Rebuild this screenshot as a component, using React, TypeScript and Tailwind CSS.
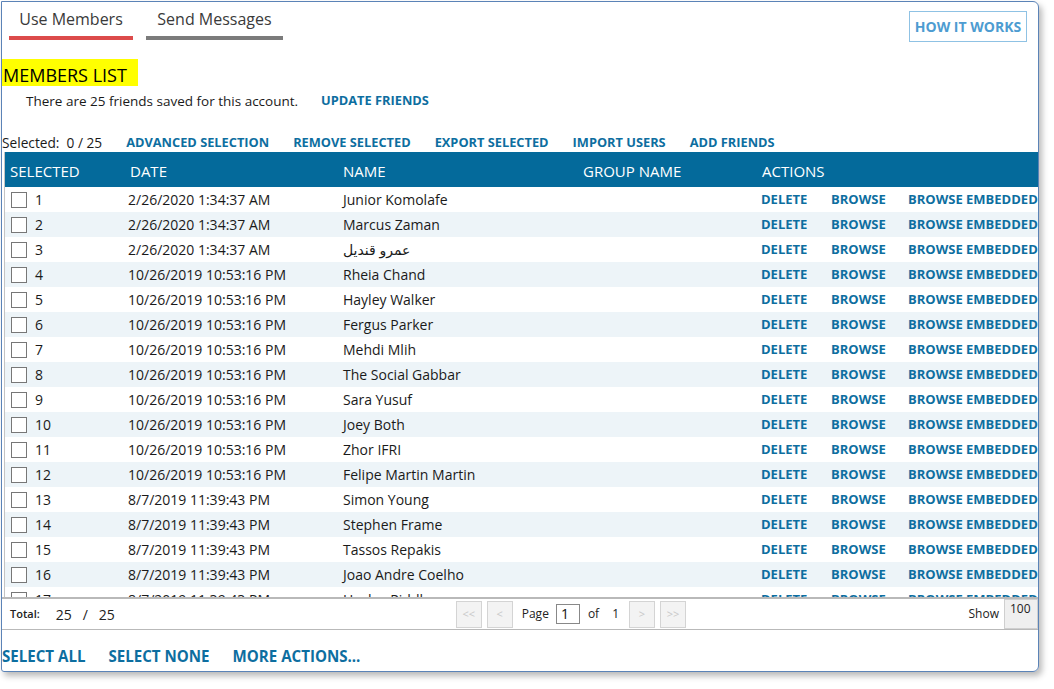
import React from "react";

const rows: [string, string, string][] = [
  ["1", "2/26/2020 1:34:37 AM", "Junior Komolafe"],
  ["2", "2/26/2020 1:34:37 AM", "Marcus Zaman"],
  ["3", "2/26/2020 1:34:37 AM", "عمرو قنديل"],
  ["4", "10/26/2019 10:53:16 PM", "Rheia Chand"],
  ["5", "10/26/2019 10:53:16 PM", "Hayley Walker"],
  ["6", "10/26/2019 10:53:16 PM", "Fergus Parker"],
  ["7", "10/26/2019 10:53:16 PM", "Mehdi Mlih"],
  ["8", "10/26/2019 10:53:16 PM", "The Social Gabbar"],
  ["9", "10/26/2019 10:53:16 PM", "Sara Yusuf"],
  ["10", "10/26/2019 10:53:16 PM", "Joey Both"],
  ["11", "10/26/2019 10:53:16 PM", "Zhor IFRI"],
  ["12", "10/26/2019 10:53:16 PM", "Felipe Martin Martin"],
  ["13", "8/7/2019 11:39:43 PM", "Simon Young"],
  ["14", "8/7/2019 11:39:43 PM", "Stephen Frame"],
  ["15", "8/7/2019 11:39:43 PM", "Tassos Repakis"],
  ["16", "8/7/2019 11:39:43 PM", "Joao Andre Coelho"],
  ["17", "8/7/2019 11:39:43 PM", "Hayley Riddle"],
];

const font = { fontFamily: '"Open Sans", "DejaVu Sans", sans-serif' };

function PagerBtn({ label }: { label: string }) {
  return (
    <div className="w-[26px] h-[27px] border border-[#d4d4d4] bg-[#f3f3f3] flex items-center justify-center text-[11px] text-[#c8c8c8]">
      {label}
    </div>
  );
}

export default function App() {
  return (
    <div className="w-[1054px] h-[689px] bg-white overflow-hidden" style={font}>
      <div className="ml-px mt-px w-[1038px] h-[671px] border border-[#5b83b7] rounded-r-[6px] rounded-bl-[3px] shadow-[3px_4px_6px_rgba(0,0,0,0.28)] overflow-hidden flex flex-col">
        {/* header row */}
        <div className="h-[40px] flex justify-between items-start shrink-0">
          <div className="flex gap-[13px] ml-[7px] pt-[7px]">
            <div className="flex flex-col items-center w-[124px]">
              <div className="h-[20px] leading-[20px] text-[16px] text-[#3a3a3a]">Use Members</div>
              <div className="mt-[7px] h-[4px] w-full bg-[#dc4b4b]" />
            </div>
            <div className="flex flex-col items-center w-[137px]">
              <div className="h-[20px] leading-[20px] text-[16px] text-[#3a3a3a]">Send Messages</div>
              <div className="mt-[7px] h-[4px] w-full bg-[#7b7b7b]" />
            </div>
          </div>
          <div className="mt-[9px] mr-[11px] w-[118px] h-[31px] border border-[#8fc2e4] flex items-center justify-center text-[14px] font-bold text-[#4d9cd1]">
            HOW IT WORKS
          </div>
        </div>

        {/* members list */}
        <div className="mt-[17px] flex shrink-0">
          <div className="flex h-[27px] w-[136px] bg-[#ffff00] items-end pl-[1px] text-[18px] leading-[22px] text-black">
            MEMBERS LIST
          </div>
        </div>
        <div className="mt-[5px] h-[20px] flex items-center pl-[24px] gap-[23px] shrink-0">
          <span className="text-[13.5px] text-[#1a1a1a]">There are 25 friends saved for this account.</span>
          <span className="text-[12.8px] font-bold text-[#0d6ea0]">UPDATE FRIENDS</span>
        </div>

        {/* selection row */}
        <div className="mt-[23px] h-[18px] flex items-center gap-[24px] shrink-0 text-[12.8px] font-bold text-[#0d6ea0]">
          <span className="text-[13.7px] font-normal text-[#1a1a1a]">Selected:&nbsp; 0 / 25</span>
          <span>ADVANCED SELECTION</span>
          <span>REMOVE SELECTED</span>
          <span>EXPORT SELECTED</span>
          <span>IMPORT USERS</span>
          <span>ADD FRIENDS</span>
        </div>

        {/* table */}
        <div className="ml-[2px] h-[445px] overflow-hidden border-l border-[#c4c4c4] shrink-0">
          <div className="h-[35px] pt-[3px] bg-[#046a9b] grid grid-cols-[120px_213px_240px_179px_1fr] items-center text-[15px] text-white">
            <div className="pl-[5px]">SELECTED</div>
            <div className="pl-[5px]">DATE</div>
            <div className="pl-[5px]">NAME</div>
            <div className="pl-[5px]">GROUP NAME</div>
            <div className="pl-[5px]">ACTIONS</div>
          </div>
          {rows.map(([n, d, name], i) => (
            <div
              key={n}
              className={`h-[25px] grid grid-cols-[120px_213px_240px_179px_1fr] items-center text-[14px] text-[#1a1a1a] ${
                i % 2 === 1 ? "bg-[#edf4f8]" : "bg-white"
              }`}
            >
              <div className="pl-[6px] flex items-center gap-[8px]">
                <div className="w-[16px] h-[16px] border border-[#777] bg-white" />
                <span>{n}</span>
              </div>
              <div className="pl-[3px] whitespace-nowrap">{d}</div>
              <div className="pl-[5px] whitespace-nowrap">{name}</div>
              <div />
              <div className="pl-[4px] flex whitespace-nowrap text-[13px] font-bold text-[#0d6ea0]">
                <span className="w-[70px]">DELETE</span>
                <span className="w-[77px]">BROWSE</span>
                <span>BROWSE EMBEDDED</span>
              </div>
            </div>
          ))}
        </div>

        {/* footer pager */}
        <div className="h-[33px] border-t-2 border-b border-[#b9b9b9] flex items-center shrink-0">
          <span className="ml-[8px] text-[11px] font-semibold text-[#222]">Total:</span>
          <span className="ml-[16px] text-[14px] text-[#222]">25&nbsp;&nbsp; / &nbsp;&nbsp;25</span>
          <div className="ml-[341px] flex items-center">
            <PagerBtn label="<<" />
            <div className="w-[5px]" />
            <PagerBtn label="<" />
            <span className="ml-[9px] text-[12px] text-[#222]">Page</span>
            <div className="ml-[7px] w-[24px] h-[20px] border border-[#888] bg-white text-[14px] leading-[18px] pl-[4px] text-[#111]">1</div>
            <span className="ml-[8px] text-[12px] text-[#222]">of</span>
            <span className="ml-[13px] text-[12px] text-[#222]">1</span>
            <div className="ml-[10px]" />
            <PagerBtn label=">" />
            <div className="w-[5px]" />
            <PagerBtn label=">>" />
          </div>
          <div className="ml-auto flex items-center h-full">
            <span className="text-[12px] text-[#222] mr-[5px]">Show</span>
            <div className="w-[34px] h-[30px] bg-[#efefef] border border-[#cfcfcf] text-[12px] text-[#222] pl-[5px] leading-[18px]">100</div>
          </div>
        </div>

        {/* bottom links */}
        <div className="mt-[16px] h-[20px] flex items-center gap-[23px] shrink-0 text-[15.1px] font-bold text-[#0d6ea0]">
          <span>SELECT ALL</span>
          <span>SELECT NONE</span>
          <span>MORE ACTIONS...</span>
        </div>
      </div>
    </div>
  );
}
